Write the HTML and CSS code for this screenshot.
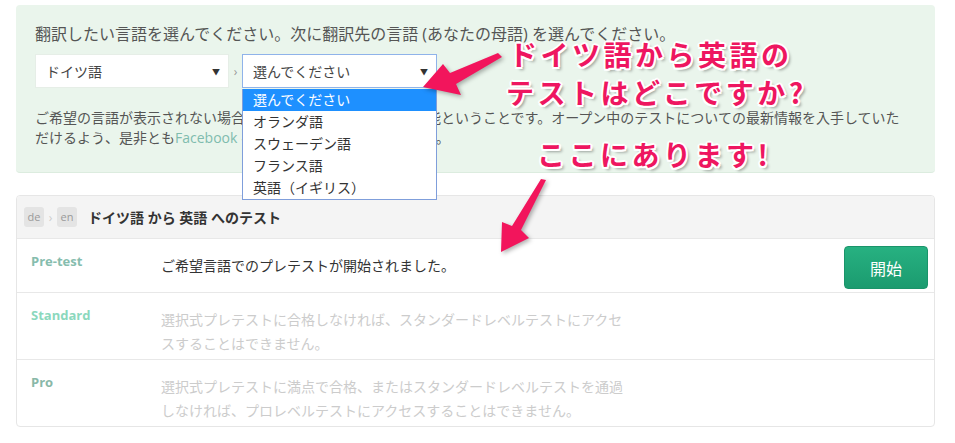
FILE: index.html
```html
<!DOCTYPE html>
<html lang="ja">
<head>
<meta charset="utf-8">
<title>テスト選択</title>
<link rel="stylesheet" href="styles.css">
</head>
<body>
<div class="page">
  <section class="intro">
    <p class="lead">翻訳したい言語を選んでください。次に翻訳先の言語 (あなたの母語) を選んでください。</p>
    <div class="pickers">
      <div class="select"><span class="value">ドイツ語</span><span class="caret">▼</span></div>
      <span class="sep">›</span>
      <div class="select focus"><span class="value">選んでください</span><span class="caret">▼</span>
        <ul class="menu">
          <li class="active">選んでください</li>
          <li>オランダ語</li>
          <li>スウェーデン語</li>
          <li>フランス語</li>
          <li>英語（イギリス）</li>
        </ul>
      </div>
    </div>
    <p class="note">ご希望の言語が表示されない場合は、その言語は現在受験不可能ということです。オープン中のテストについての最新情報を入手していた<br>だけるよう、是非とも<a class="link" href="#">Facebook ページ</a>をフォローしてください。</p>
  </section>

  <section class="tests">
    <div class="tests-head">
      <span class="badge">de</span>
      <span class="hsep">›</span>
      <span class="badge">en</span>
      <span class="title">ドイツ語 から 英語 へのテスト</span>
    </div>
    <div class="row">
      <div class="label pre">Pre-test</div>
      <div class="desc">ご希望言語でのプレテストが開始されました。</div>
      <button class="start">開始</button>
    </div>
    <div class="row">
      <div class="label std">Standard</div>
      <div class="desc off">選択式プレテストに合格しなければ、スタンダードレベルテストにアクセスすることはできません。</div>
    </div>
    <div class="row last">
      <div class="label pro">Pro</div>
      <div class="desc off">選択式プレテストに満点で合格、またはスタンダードレベルテストを通過しなければ、プロレベルテストにアクセスすることはできません。</div>
    </div>
  </section>
</div>

<div class="annot a1">ドイツ語から英語の</div>
<div class="annot a2">テストはどこですか?</div>
<div class="annot a3">ここにあります!</div>

<svg class="arrows" width="955" height="443" viewBox="0 0 955 443">
  <polygon points="423,87 443,64 450,73 498,53 502,57 456,84 461,95" />
  <polygon points="541,179 546,180 521,230 529,238 501,252 502,222 512,226" />
</svg>
</body>
</html>
```

FILE: styles.css
```css
html, body {
  margin: 0;
  padding: 0;
  background: #ffffff;
}

body {
  width: 955px;
  height: 443px;
  overflow: hidden;
  position: relative;
  font-family: "Open Sans", "Noto Sans CJK JP", sans-serif;
  color: #555555;
}

.page {
  padding: 5px 20px 0 16px;
}

.intro {
  box-sizing: border-box;
  height: 168px;
  padding: 18px 19px 0;
  background: #eaf5ec;
  border-bottom: 1px solid #dcecdf;
  border-radius: 4px;
}

.lead {
  margin: 0;
  font-size: 16px;
  line-height: 22px;
  color: #555555;
}

.pickers {
  margin-top: 9px;
  display: flex;
  align-items: center;
  height: 34px;
}

.select {
  position: relative;
  box-sizing: border-box;
  width: 194px;
  height: 34px;
  background: #ffffff;
  border: 1px solid #e6eee7;
  display: flex;
  align-items: center;
  justify-content: space-between;
  padding: 0 8px 0 10px;
  font-size: 14px;
  color: #444444;
}

.select.focus {
  width: 195px;
  border: 1px solid #8fb3ea;
}

.caret {
  font-size: 8px;
  color: #333333;
}

.sep {
  width: 13px;
  text-align: center;
  font-size: 12px;
  color: #999999;
}

.menu {
  position: absolute;
  left: -1px;
  top: 34px;
  box-sizing: border-box;
  width: 195px;
  margin: 0;
  padding: 0;
  list-style: none;
  background: #ffffff;
  border: 1px solid #7f9edb;
  border-top: none;
  z-index: 5;
}

.menu li {
  height: 22px;
  line-height: 22px;
  padding-left: 10px;
  font-size: 14px;
  color: #333333;
}

.menu li.active {
  background: #1e90ff;
  color: #ffffff;
}

.note {
  margin: 20px 0 0;
  font-size: 14px;
  line-height: 20px;
  color: #555555;
}

.link {
  color: #7fbcae;
  text-decoration: none;
}

.tests {
  margin-top: 22px;
  border: 1px solid #e6e6e6;
  border-radius: 4px;
}

.tests-head {
  height: 42px;
  background: #f4f4f4;
  border-bottom: 1px solid #e8e8e8;
  border-radius: 4px 4px 0 0;
  display: flex;
  align-items: center;
  padding-left: 7px;
}

.badge {
  width: 20px;
  height: 20px;
  background: #e4e4e4;
  border-radius: 3px;
  font-size: 11px;
  line-height: 20px;
  text-align: center;
  color: #9a9a9a;
}

.hsep {
  width: 13px;
  text-align: center;
  font-size: 12px;
  color: #cccccc;
}

.title {
  margin-left: 11px;
  font-size: 14px;
  font-weight: 700;
  color: #333333;
}

.row {
  display: flex;
  align-items: flex-start;
  padding: 0 6px 3px 14px;
  border-bottom: 1px solid #e8e8e8;
}

.row.last {
  border-bottom: none;
}

.label {
  width: 130px;
  flex: none;
  padding-top: 12px;
  font-size: 13px;
  line-height: 20px;
  font-weight: 700;
}

.label.pre { color: #86bdae; }
.label.std { color: #8bd8bd; }
.label.pro { color: #89b8a8; }

.desc {
  width: 470px;
  padding-top: 15px;
  font-size: 14px;
  line-height: 24px;
  color: #333333;
}

.desc.off {
  color: #cccccc;
}

.start {
  margin: 7px 0 0 auto;
  width: 84px;
  height: 43px;
  border: 1px solid #1a946a;
  border-radius: 4px;
  background: linear-gradient(#27b181, #1b9b6f);
  color: #ffffff;
  font-family: "Noto Sans CJK JP", sans-serif;
  font-size: 16px;
}

.annot {
  position: absolute;
  font-family: "Noto Sans CJK JP", sans-serif;
  font-weight: 700;
  font-size: 28px;
  line-height: 1;
  letter-spacing: 3.5px;
  color: #ee1660;
  white-space: nowrap;
  text-shadow:
    2px 0 0 #fff, -2px 0 0 #fff, 0 2px 0 #fff, 0 -2px 0 #fff,
    1.5px 1.5px 0 #fff, -1.5px 1.5px 0 #fff, 1.5px -1.5px 0 #fff, -1.5px -1.5px 0 #fff,
    3px 3px 3px rgba(0, 0, 0, 0.35);
  z-index: 10;
}

.a1 { left: 509px; top: 40px; }
.a2 { left: 506px; top: 78px; }
.a3 { left: 537px; top: 140px; }

.arrows {
  position: absolute;
  left: 0;
  top: 0;
  pointer-events: none;
  z-index: 9;
  fill: #f2155c;
  filter: drop-shadow(2px 2px 2px rgba(0, 0, 0, 0.3));
}
```
